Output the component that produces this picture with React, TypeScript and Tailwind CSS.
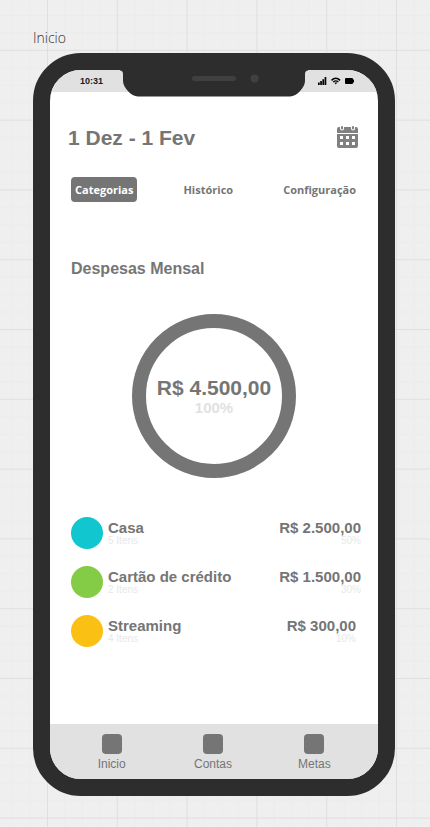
type Expense = {
  name: string;
  items: string;
  amount: string;
  share: string;
  dot: string;
  inset: string;
};

const expenses: Expense[] = [
  { name: "Casa", items: "5 Itens", amount: "R$ 2.500,00", share: "50%", dot: "bg-[#12c6cf]", inset: "" },
  { name: "Cartão de crédito", items: "2 Itens", amount: "R$ 1.500,00", share: "30%", dot: "bg-[#84cc46]", inset: "" },
  { name: "Streaming", items: "4 Itens", amount: "R$ 300,00", share: "10%", dot: "bg-[#fac014]", inset: "pr-[5px]" },
];

const navItems = ["Inicio", "Contas", "Metas"];

function CanvasGrid() {
  return (
    <svg className="absolute inset-0 h-full w-full" aria-hidden="true">
      <defs>
        <pattern id="canvas-grid" x="47" y="49.8" width="69.8" height="69.8" patternUnits="userSpaceOnUse">
          <path d="M18 0V70M35.4 0V70M52.8 0V70M0 18H70M0 35.4H70M0 52.8H70" stroke="#ececec" fill="none" />
          <path d="M0.5 0V70M0 0.5H70" stroke="#dfdfdf" fill="none" />
        </pattern>
      </defs>
      <rect width="100%" height="100%" fill="url(#canvas-grid)" />
    </svg>
  );
}

function Notch() {
  return (
    <svg
      className="absolute left-1/2 top-0 -translate-x-1/2"
      width="188"
      height="27"
      viewBox="0 0 188 27"
      aria-hidden="true"
    >
      <path
        d="M0 0H188V0.500Q185 0.500 185 4V11C185 17 177 26.500 170 26.500H18C11 26.500 3 17 3 11V4Q3 0.500 0 0.500Z"
        fill="#2d2d2d"
      />
      <rect x="72" y="6" width="44" height="5" rx="2.5" fill="#404040" />
      <circle cx="134.500" cy="8.500" r="4" fill="#404040" />
    </svg>
  );
}

function StatusIcons() {
  return (
    <svg width="36" height="8" viewBox="0 0 36 8" aria-hidden="true">
      <path d="M0 5.500h1.700v2.500H0zM2.200 4h1.700v4H2.200zM4.400 2.200h1.700v5.800H4.400zM6.600 0h1.700v8H6.600z" />
      <path d="M13.500 3.400Q17.800-0.800 22.100 3.400" fill="none" stroke="#000" strokeWidth="1.500" />
      <path d="M15.200 5Q17.800 2.600 20.400 5" fill="none" stroke="#000" strokeWidth="1.200" />
      <path d="M16.300 5.600h3L17.800 7.400z" />
      <rect x="27" y="1" width="8" height="6" rx="1" />
      <rect x="34.500" y="2.500" width="1.500" height="3" rx="0.500" />
    </svg>
  );
}

function CalendarIcon() {
  return (
    <svg width="21" height="22" viewBox="0 0 21 22" fill="#808080" aria-hidden="true">
      <path d="M0 3Q0 1 2 1H3V2.500Q3 4.500 5 4.500T7 2.500V1H14V2.500Q14 4.500 16 4.500T18 2.500V1H19Q21 1 21 3V7H0Z" />
      <rect x="4" y="0" width="2" height="3.500" rx="1" />
      <rect x="15" y="0" width="2" height="3.500" rx="1" />
      <path
        fillRule="evenodd"
        d="M0 8H21V20Q21 22 19 22H2Q0 22 0 20ZM3 10V13H6V10ZM9 10V13H12V10ZM15 10V13H18V10ZM3 16V19H6V16ZM9 16V19H12V16ZM15 16V19H18V16Z"
      />
    </svg>
  );
}

export default function App() {
  return (
    <div className="relative min-h-screen bg-[#efefef] pt-7 pr-[35px] pb-[30px] pl-[33px] font-['Liberation_Sans',Arial,sans-serif] text-[#757575]">
      <CanvasGrid />
      <div className="relative">
        <h1 className="mb-[5px] font-['Open_Sans',sans-serif] text-[14px] leading-5 font-light text-[#333]">Inicio</h1>

        <div className="relative overflow-hidden rounded-[48px] border-[17px] border-[#2d2d2d] bg-white">
          <header className="relative flex h-[22px] items-center justify-between bg-[#e1e1e1] pr-6 pl-[30px]">
            <span className="text-[9px] leading-none font-bold text-[#1a1a1a]">10:31</span>
            <StatusIcons />
            <Notch />
          </header>

          <main>
            <div className="flex items-center justify-between pt-[31px] pr-5 pl-[18px]">
              <h2 className="text-[21px] leading-[30px] font-bold">1 Dez - 1 Fev</h2>
              <button type="button" aria-label="Calendário" className="pb-[2px]">
                <CalendarIcon />
              </button>
            </div>

            <div className="mt-6 flex justify-between pr-[18px] pl-[21px] font-['Open_Sans',sans-serif] text-[11px] leading-[25px] font-bold">
              <button type="button" className="rounded-[4px] bg-[#757575] px-1 text-white">
                Categorias
              </button>
              <button type="button" className="px-1">
                Histórico
              </button>
              <button type="button" className="px-1">
                Configuração
              </button>
            </div>

            <h3 className="mt-[57px] pl-[21px] text-[16px] leading-5 font-bold">Despesas Mensal</h3>

            <div className="mx-auto mt-[35px] flex size-[164px] flex-col items-center justify-center rounded-full border-[14px] border-[#757575]">
              <p className="text-[21px] leading-6 font-bold">R$ 4.500,00</p>
              <p className="text-[15px] leading-4 font-bold text-[#e1e1e1]">100%</p>
            </div>

            <ul className="mt-[38px] flex flex-col gap-4 pr-[17px] pl-[21px]">
              {expenses.map((expense) => (
                <li key={expense.name} className="flex h-[33px] items-center gap-[5px]">
                  <span className={`size-8 shrink-0 rounded-full ${expense.dot}`} />
                  <div className="flex-1">
                    <p className="text-[15px] leading-4 font-bold">{expense.name}</p>
                    <p className="text-[10px] leading-[10px] text-[#e8e8e8]">{expense.items}</p>
                  </div>
                  <div className={`text-right ${expense.inset}`}>
                    <p className="text-[15px] leading-4 font-bold">{expense.amount}</p>
                    <p className="text-[10px] leading-[10px] text-[#e8e8e8]">{expense.share}</p>
                  </div>
                </li>
              ))}
            </ul>
          </main>

          <nav className="mt-[77px] grid h-[55px] grid-cols-3 bg-[#e1e1e1] pt-[10px] pr-[13px] pl-[11px]">
            {navItems.map((item) => (
              <a key={item} href="#" className="flex flex-col items-center gap-[2px] text-[12px] leading-4">
                <span className="size-5 rounded-[4px] bg-[#757575]" />
                {item}
              </a>
            ))}
          </nav>
        </div>
      </div>
    </div>
  );
}
